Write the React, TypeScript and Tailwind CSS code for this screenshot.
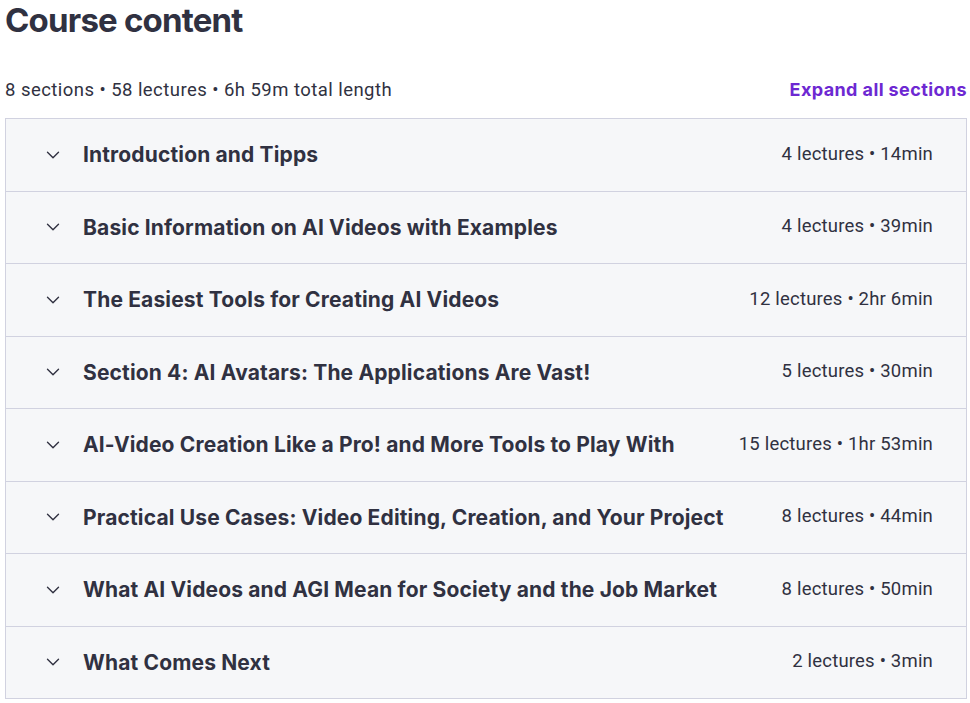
import { ChevronDown } from "lucide-react";

const sections = [
  { title: "Introduction and Tipps", meta: "4 lectures • 14min" },
  { title: "Basic Information on AI Videos with Examples", meta: "4 lectures • 39min" },
  { title: "The Easiest Tools for Creating AI Videos", meta: "12 lectures • 2hr 6min" },
  { title: "Section 4: AI Avatars: The Applications Are Vast!", meta: "5 lectures • 30min" },
  { title: "AI-Video Creation Like a Pro! and More Tools to Play With", meta: "15 lectures • 1hr 53min" },
  { title: "Practical Use Cases: Video Editing, Creation, and Your Project", meta: "8 lectures • 44min" },
  { title: "What AI Videos and AGI Mean for Society and the Job Market", meta: "8 lectures • 50min" },
  { title: "What Comes Next", meta: "2 lectures • 3min" },
];

export default function App() {
  return (
    <div className="min-h-screen bg-white text-[#303141] pl-[5px] pr-[3px] font-['Roboto',sans-serif]">
      <h2 className="text-[33px] leading-[40px] font-bold font-['Inter',sans-serif] tracking-[-0.8px]">
        Course content
      </h2>

      <div className="flex items-center justify-between mt-[37px] mb-[15px]">
        <span className="text-[18.5px] leading-[26px] tracking-[0.45px]">
          8 sections • 58 lectures • 6h 59m total length
        </span>
        <button className="text-[18px] leading-[26px] font-bold tracking-[0.4px] text-[#6d28d2] font-['Inter',sans-serif]">
          Expand all sections
        </button>
      </div>

      {/* Curriculum */}
      <div className="border border-[#d1d2e0] bg-[#f6f7f9]">
        {sections.map((s, i) => (
          <div
            key={s.title}
            className={
              "flex items-center justify-between pl-[36px] pr-[33px]" +
              (i > 0 ? " h-[72.5px] border-t border-[#d1d2e0]" : " h-[71.5px]")
            }
          >
            <div className="flex items-center gap-[19px]">
              <ChevronDown className="w-[22px] h-[22px] shrink-0" strokeWidth={1.5} />
              <span className="text-[21px] font-bold font-['Inter',sans-serif] tracking-[0.15px]">
                {s.title}
              </span>
            </div>
            <span className="text-[18.5px] tracking-[0.2px]">{s.meta}</span>
          </div>
        ))}
      </div>
    </div>
  );
}
